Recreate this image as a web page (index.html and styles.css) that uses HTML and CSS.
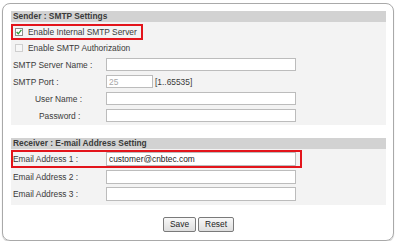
FILE: index.html
```html
<!DOCTYPE html>
<html>
<head>
<meta charset="utf-8">
<link rel="stylesheet" href="styles.css">
</head>
<body>
<div class="panel">
  <section class="group">
    <div class="group-title">Sender : SMTP Settings</div>
    <div class="group-body">
      <div class="row check-row mark">
        <span class="cb checked"><svg width="6" height="6" viewBox="0 0 6 6"><polyline points="0.6,3 2.3,4.8 5.4,0.9" fill="none" stroke="#2f9a3a" stroke-width="1.3"/></svg></span>
        <span>Enable Internal SMTP Server</span>
      </div>
      <div class="row check-row">
        <span class="cb disabled"></span>
        <span>Enable SMTP Authorization</span>
      </div>
      <div class="row field">
        <label class="lbl">SMTP Server Name :</label>
        <input class="inp wide" type="text">
      </div>
      <div class="row field">
        <label class="lbl">SMTP Port :</label>
        <input class="inp port" type="text" value="25" disabled>
        <span class="range">[1..65535]</span>
      </div>
      <div class="row field">
        <label class="lbl ind1">User Name :</label>
        <input class="inp wide" type="text">
      </div>
      <div class="row field">
        <label class="lbl ind2">Password :</label>
        <input class="inp wide" type="password">
      </div>
    </div>
  </section>
  <section class="group second">
    <div class="group-title">Receiver : E-mail Address Setting</div>
    <div class="group-body body2">
      <div class="row field mail mark">
        <label class="lbl">Email Address 1 :</label>
        <input class="inp wide tall" type="text" value="customer@cnbtec.com">
      </div>
      <div class="row field mail">
        <label class="lbl">Email Address 2 :</label>
        <input class="inp wide tall" type="text">
      </div>
      <div class="row field mail">
        <label class="lbl">Email Address 3 :</label>
        <input class="inp wide tall" type="text">
      </div>
    </div>
  </section>
  <div class="actions">
    <button class="btn" type="button">Save</button>
    <button class="btn" type="button">Reset</button>
  </div>
</div>
</body>
</html>
```
FILE: styles.css
```css
body {
  margin: 0;
  background: #fff;
  font-family: "Liberation Sans", Arial, sans-serif;
  font-size: 8.4px;
  color: #3a3a3a;
}
.panel {
  box-sizing: border-box;
  margin: 3px 0 0 2px;
  width: 392px;
  height: 238px;
  border: 1px solid #a9a9a9;
  border-radius: 8px;
  padding: 7px 7px 0 8px;
  box-shadow: 0 1px 1px #c4c4c4;
}
.group-title {
  height: 11px;
  line-height: 11px;
  background: #d2d2d2;
  font-weight: bold;
  padding-left: 2px;
}
.group-body {
  background: #f3f3f3;
  padding: 2px 0 1px;
}
.second { margin-top: 13px; }
.body2 { padding: 1px 0 3px; }
.row {
  display: flex;
  align-items: center;
  box-sizing: border-box;
}
.check-row {
  height: 16px;
  width: 132px;
  border: 2px solid transparent;
  padding-left: 2px;
  gap: 5px;
}
.mark { border-color: #e3141b; }
.cb {
  box-sizing: border-box;
  width: 8px;
  height: 8px;
  border: 1px solid #8e8e8e;
  background: #fff;
  display: flex;
  align-items: center;
  justify-content: center;
}
.cb.disabled {
  border-color: #cfcfcf;
  background: #f7f7f7;
}
.field { height: 17px; }
.lbl {
  box-sizing: border-box;
  width: 95px;
  padding-left: 2px;
  flex: none;
}
.ind1 { padding-left: 24px; }
.ind2 { padding-left: 28px; }
.inp {
  box-sizing: border-box;
  height: 13px;
  border: 1px solid #bcbcbc;
  background: #fff;
  margin: 0;
  padding: 0 2px;
  font-family: inherit;
  font-size: 8.4px;
  color: #222;
  outline: none;
}
.wide { width: 190px; }
.port { width: 47px; }
.inp:disabled { color: #a8a8a8; background: #fff; }
.range { margin-left: 2px; }
.mail { border: 2px solid transparent; width: 291px; }
.mail.mark { border-color: #e3141b; height: 18px; }
.mail .lbl { width: 93px; padding-left: 0; }
.tall { height: 14px; }
.actions {
  margin-top: 12px;
  display: flex;
  justify-content: center;
  gap: 2px;
}
.btn {
  box-sizing: border-box;
  height: 15px;
  padding: 0 6px;
  font-family: inherit;
  font-size: 8.4px;
  color: #222;
  border: 1px solid #7a7a7a;
  border-radius: 2px;
  background: linear-gradient(#f8f8f8, #dedede);
  line-height: 13px;
}
```
